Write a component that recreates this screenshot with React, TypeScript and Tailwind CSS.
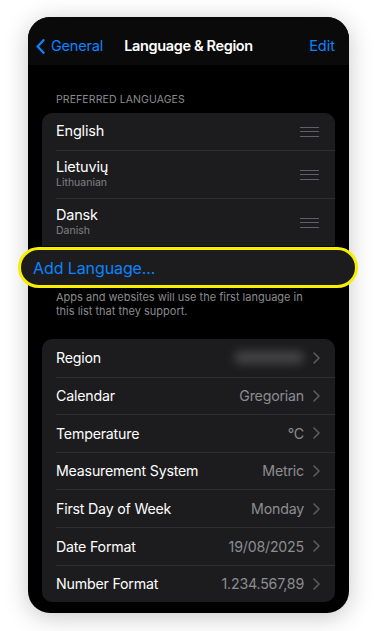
import React from "react";

const languages = [
  { name: "English" },
  { name: "Lietuvių", sub: "Lithuanian" },
  { name: "Dansk", sub: "Danish" },
];

const settings = [
  { label: "Region", value: null },
  { label: "Calendar", value: "Gregorian" },
  { label: "Temperature", value: "°C" },
  { label: "Measurement System", value: "Metric" },
  { label: "First Day of Week", value: "Monday" },
  { label: "Date Format", value: "19/08/2025" },
  { label: "Number Format", value: "1.234.567,89" },
];

function ChevronRight() {
  return (
    <svg width="7" height="12" viewBox="0 0 7 12" className="shrink-0">
      <path d="M1 1l5 5-5 5" fill="none" stroke="#5b5b60" strokeWidth="1.6" strokeLinecap="round" strokeLinejoin="round" />
    </svg>
  );
}

function Grip() {
  return (
    <div className="flex w-[19px] flex-col gap-[3.5px]">
      <span className="h-px w-full bg-[#606064]" />
      <span className="h-px w-full bg-[#606064]" />
      <span className="h-px w-full bg-[#606064]" />
    </div>
  );
}

export default function App() {
  return (
    <div className="min-h-screen bg-white pt-[17px]" style={{ fontFamily: "Inter, 'Noto Sans', sans-serif" }}>
      <div className="mx-auto h-[596px] w-[321px] rounded-[22px] bg-black shadow-[0_4px_24px_rgba(0,0,0,0.22)]">
        {/* nav bar */}
        <div className="grid h-12 grid-cols-[1fr_auto_1fr] items-center rounded-t-[22px] bg-[#0a0a0a] px-[8px] pt-[10px]">
          <div className="flex items-center gap-[6px] text-[14.5px] text-[#0a84ff]">
            <svg width="9" height="15" viewBox="0 0 9 15">
              <path d="M7.5 1.2L1.6 7.5l5.9 6.3" fill="none" stroke="#0a84ff" strokeWidth="2.3" strokeLinecap="round" strokeLinejoin="round" />
            </svg>
            <span className="tracking-[-0.2px]">General</span>
          </div>
          <span className="text-[14.5px] font-semibold tracking-[-0.35px] text-white">Language &amp; Region</span>
          <span className="justify-self-end pr-[6px] text-[14.5px] text-[#0a84ff]">Edit</span>
        </div>

        <div className="px-[14px]">
          <p className="mt-[28px] pl-[14px] text-[10.5px] uppercase leading-[14px] tracking-[0.1px] text-[#8a8a8e]">
            Preferred Languages
          </p>

          <div className="mt-[6px] rounded-t-[10px] bg-[#1c1c1e]">
            {languages.map((l, i) => (
              <div key={l.name} className={`flex items-center pl-[14px] ${i > 0 ? "h-[48px]" : "h-[37px]"}`}>
                <div className={`flex h-full flex-1 items-center justify-between pr-[16px] ${i > 0 ? "border-t border-[#2f2f31]" : ""}`}>
                  <div className="flex flex-col">
                    <span className={`text-[14.5px] leading-[18px] tracking-[-0.2px] text-white ${l.sub ? "mt-[-2px]" : "mt-[-1px]"}`}>{l.name}</span>
                    {l.sub && <span className="text-[10.5px] leading-[14px] text-[#808085]">{l.sub}</span>}
                  </div>
                  <Grip />
                </div>
              </div>
            ))}
          </div>

          {/* highlighted row */}
          <div className="relative ml-[-24px] mr-[-23px] mt-[1px] flex h-[41px] items-center rounded-full border-[3px] border-[#f7ee00] bg-[#1c1c1e] pl-[12px]">
            <span className="text-[16px] tracking-[-0.1px] text-[#0a84ff]">Add Language...</span>
          </div>

          <p className="mt-[2px] pl-[14px] pr-[30px] text-[11px] leading-[14px] text-[#8a8a8e]">
            Apps and websites will use the first language in this list that they support.
          </p>

          <div className="mt-[21px] overflow-hidden rounded-[10px] bg-[#1c1c1e]">
            {settings.map((s, i) => (
              <div key={s.label} className="flex h-[37.6px] pl-[14px]">
                <div className={`flex flex-1 items-center justify-between pr-[15px] ${i > 0 ? "border-t border-[#2f2f31]" : ""}`}>
                  <span className="text-[14.2px] tracking-[-0.2px] text-white">{s.label}</span>
                  <div className="flex items-center gap-[9px]">
                    {s.value ? (
                      <span className="text-[14.2px] tracking-[-0.2px] text-[#8d8d92]">{s.value}</span>
                    ) : (
                      <span className="h-[13px] w-[70px] rounded-full bg-[#444446] blur-[5px]" />
                    )}
                    <ChevronRight />
                  </div>
                </div>
              </div>
            ))}
          </div>
        </div>
      </div>
    </div>
  );
}
